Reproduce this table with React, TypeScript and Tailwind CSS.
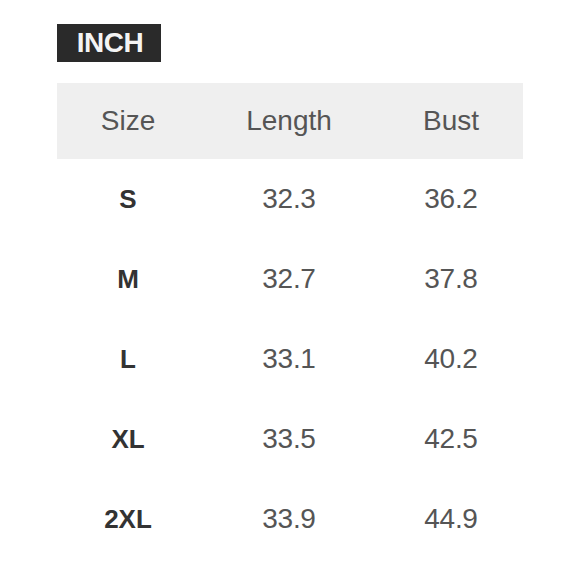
import React from "react";

const rows = [
  ["S", "32.3", "36.2"],
  ["M", "32.7", "37.8"],
  ["L", "33.1", "40.2"],
  ["XL", "33.5", "42.5"],
  ["2XL", "33.9", "44.9"],
];

export default function App() {
  return (
    <div className="w-[580px] h-[580px] bg-white pt-[24px] pl-[57px]" style={{ fontFamily: '"Liberation Sans", Arial, sans-serif' }}>
      <div className="inline-flex items-center justify-center h-[38px] w-[104px] bg-[#2a2a2a] text-[#f4f4f4] text-[28px] font-bold leading-none tracking-[-0.5px] pl-[2px]">
        INCH
      </div>
      <div className="mt-[21px] w-[466px]">
        <div className="grid grid-cols-[142px_180px_144px] h-[76px] bg-[#efefef] items-center text-[28px] text-[#555]">
          <div className="text-center">Size</div>
          <div className="text-center">Length</div>
          <div className="text-center">Bust</div>
        </div>
        {rows.map((r) => (
          <div key={r[0]} className="grid grid-cols-[142px_180px_144px] h-[80px] items-center text-[28px] tracking-[-0.3px]">
            <div className="text-center font-bold text-[#333] text-[26px] tracking-normal">{r[0]}</div>
            <div className="text-center text-[#555]">{r[1]}</div>
            <div className="text-center text-[#555]">{r[2]}</div>
          </div>
        ))}
      </div>
    </div>
  );
}
